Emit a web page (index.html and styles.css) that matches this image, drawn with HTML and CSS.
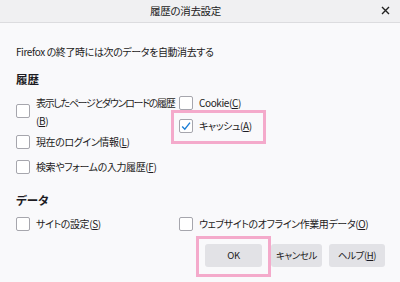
FILE: index.html
```html
<!DOCTYPE html>
<html lang="ja">
<head>
<meta charset="utf-8">
<link rel="stylesheet" href="styles.css">
</head>
<body>
<div class="dialog">
  <div class="titlebar">
    <span class="title">履歴の消去設定</span>
    <span class="close"><svg width="9" height="9" viewBox="0 0 9 9"><path d="M1 1 L8 8 M8 1 L1 8" stroke="#222" stroke-width="1.4" fill="none"/></svg></span>
  </div>
  <div class="content">
    <p class="intro">Firefox の終了時には次のデータを自動消去する</p>
    <h2 class="heading">履歴</h2>
    <div class="cols">
      <div class="col left">
        <label class="item tall"><span class="box"></span><span class="text"><span class="tight">表示したページとダウンロードの履歴</span><br>(<u>B</u>)</span></label>
        <label class="item i2"><span class="box"></span><span class="text">現在のログイン情報(<u>L</u>)</span></label>
        <label class="item i3"><span class="box"></span><span class="text">検索やフォームの入力履歴(<u>F</u>)</span></label>
      </div>
      <div class="col right">
        <label class="item"><span class="box"></span><span class="text">Cookie(<u>C</u>)</span></label>
        <label class="item cache"><span class="box checked"><svg width="12" height="12" viewBox="0 0 12 12"><path d="M2.2 6.6 L4.8 9.3 L10 2.6" stroke="#1d7fd6" stroke-width="1.4" fill="none"/></svg></span><span class="text">キャッシュ(<u>A</u>)</span><span class="hl hl-cache"></span></label>
      </div>
    </div>
    <h2 class="heading data">データ</h2>
    <div class="cols">
      <div class="col left">
        <label class="item"><span class="box"></span><span class="text">サイトの設定(<u>S</u>)</span></label>
      </div>
      <div class="col right">
        <label class="item"><span class="box"></span><span class="text">ウェブサイトのオフライン作業用データ(<u>O</u>)</span></label>
      </div>
    </div>
    <div class="buttons">
      <span class="btn ok">OK<span class="hl hl-ok"></span></span>
      <span class="btn cancel">キャンセル</span>
      <span class="btn help">ヘルプ(<u>H</u>)</span>
    </div>
  </div>
</div>
</body>
</html>
```
FILE: styles.css
```css
html, body {
  margin: 0;
  padding: 0;
}
body {
  width: 400px;
  height: 282px;
  overflow: hidden;
  background: #f9f9fb;
  font-family: "Noto Sans CJK JP", "Noto Sans", sans-serif;
  font-feature-settings: "palt";
  font-size: 10px;
  letter-spacing: -0.4px;
  color: #1c1b22;
}
.dialog {
  width: 400px;
  height: 282px;
}
.titlebar {
  height: 22px;
  background: #f0f0f2;
  border-bottom: 1px solid #dcdcdf;
  display: flex;
  align-items: center;
  padding-left: 150px;
  position: relative;
}
.title {
  font-size: 10.5px;
  line-height: 22px;
  letter-spacing: -0.3px;
}
.close {
  position: absolute;
  right: 10px;
  top: 6px;
  width: 9px;
  height: 9px;
  display: flex;
}
.content {
  padding: 0 15px 0 16px;
}
.intro {
  margin: 20px 0 0 0;
  line-height: 18px;
}
.heading {
  margin: 9px 0 0 0;
  font-size: 11.5px;
  font-weight: bold;
  line-height: 18px;
  letter-spacing: 0;
}
.heading.data {
  margin-top: 13px;
}
.cols {
  display: flex;
  margin-top: 4px;
}
.col {
  display: flex;
  flex-direction: column;
}
.col.left {
  width: 163px;
  flex: none;
}
.col.left:first-child .item.tall {
  margin-top: 2px;
}
.item {
  display: flex;
  align-items: center;
  min-height: 22px;
  position: relative;
}
.item.tall {
  line-height: 18px;
}
.tight {
  letter-spacing: -1.3px;
}
.item.i2 {
  margin-top: 1px;
}
.item.i3 {
  margin-top: 3px;
}
.item.cache {
  margin-top: 1px;
}
.box {
  width: 12px;
  height: 12px;
  border: 1px solid #a6a6ad;
  border-radius: 2px;
  background: #ffffff;
  flex: none;
  margin-right: 6px;
  display: flex;
  align-items: center;
  justify-content: center;
}
.item.tall .box {
  margin-top: -3px;
}
.text {
  line-height: 18px;
  white-space: nowrap;
}
u {
  text-decoration-thickness: 1px;
  text-underline-offset: 1px;
}
.hl {
  position: absolute;
  border: 3px solid #f4aacb;
  box-sizing: border-box;
  pointer-events: none;
}
.hl-cache {
  left: -8px;
  top: -5px;
  width: 95px;
  height: 34px;
}
.buttons {
  display: flex;
  justify-content: flex-end;
  margin-top: 9px;
  gap: 7px;
}
.btn {
  height: 23px;
  line-height: 23px;
  background: #e2e2e6;
  border-radius: 3px;
  text-align: center;
  position: relative;
  font-size: 9.5px;
}
.btn.ok {
  width: 57px;
  margin-right: 2px;
}
.btn.cancel {
  width: 51px;
}
.btn.help {
  width: 56px;
}
.hl-ok {
  left: -9px;
  top: -8px;
  width: 75px;
  height: 41px;
}
```
